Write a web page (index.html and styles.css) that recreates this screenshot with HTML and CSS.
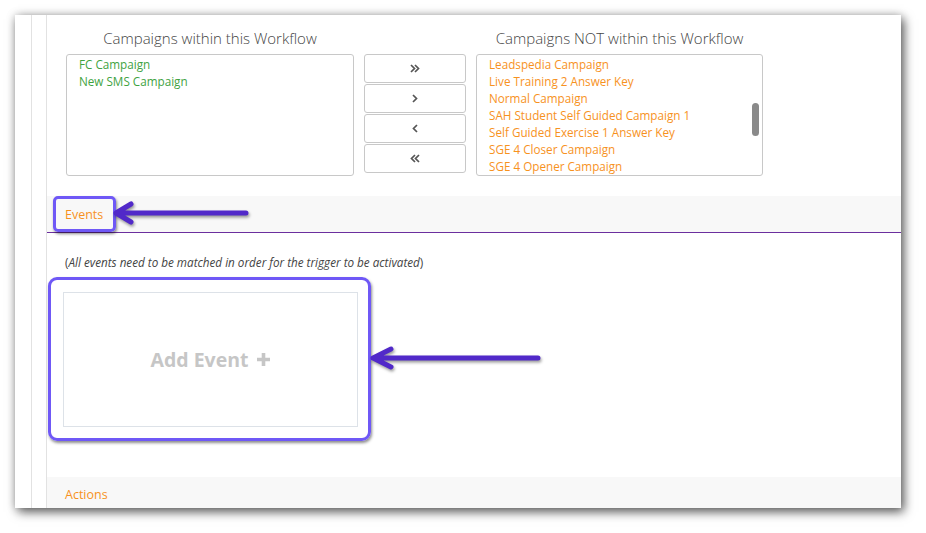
FILE: index.html
```html
<!DOCTYPE html>
<html>
<head>
<meta charset="utf-8">
<link rel="stylesheet" href="styles.css">
</head>
<body>
<div class="panel">
  <div class="rail">
    <div class="main">
      <div class="top">
        <div class="heading h-left">Campaigns within this Workflow</div>
        <div class="heading h-right">Campaigns NOT within this Workflow</div>
        <div class="listbox">
          <div class="item green">FC Campaign</div>
          <div class="item green">New SMS Campaign</div>
        </div>
        <div class="buttons">
          <div class="btn"><svg width="10" height="9" viewBox="0 0 10 9"><path d="M1 1l3.5 3.5L1 8M5 1l3.5 3.5L5 8" fill="none" stroke="#555" stroke-width="1.7"/></svg></div>
          <div class="btn"><svg width="10" height="9" viewBox="0 0 10 9"><path d="M3 1l3.5 3.5L3 8" fill="none" stroke="#555" stroke-width="1.7"/></svg></div>
          <div class="btn"><svg width="10" height="9" viewBox="0 0 10 9"><path d="M7 1L3.5 4.5 7 8" fill="none" stroke="#555" stroke-width="1.7"/></svg></div>
          <div class="btn"><svg width="10" height="9" viewBox="0 0 10 9"><path d="M5 1L1.5 4.5 5 8M9 1L5.5 4.5 9 8" fill="none" stroke="#555" stroke-width="1.7"/></svg></div>
        </div>
        <div class="listbox scroll">
          <div class="item orange">Leadspedia Campaign</div>
          <div class="item orange">Live Training 2 Answer Key</div>
          <div class="item orange">Normal Campaign</div>
          <div class="item orange">SAH Student Self Guided Campaign 1</div>
          <div class="item orange">Self Guided Exercise 1 Answer Key</div>
          <div class="item orange">SGE 4 Closer Campaign</div>
          <div class="item orange">SGE 4 Opener Campaign</div>
          <div class="thumb"></div>
        </div>
      </div>
      <div class="bar events-bar">Events</div>
      <div class="note">(<i>All events need to be matched in order for the trigger to be activated</i>)</div>
      <div class="add-box">
        <span class="add-text">Add Event</span>
        <svg class="plus" width="15" height="15" viewBox="0 0 15 15"><path d="M7.5 1v13M1 7.5h13" stroke="#c6c6c6" stroke-width="3.6"/></svg>
      </div>
      <div class="bar actions-bar">Actions</div>
    </div>
  </div>
  <div class="callout callout-events"></div>
  <div class="callout callout-add"></div>
  <svg class="arrows" width="886" height="493" viewBox="0 0 886 493">
    <g fill="none" stroke="#5129c9" stroke-width="5" stroke-linecap="round" stroke-linejoin="round">
      <path d="M101 198H231M116 189L101 198L116 207"/>
      <path d="M358 343H523M376 334L358 343L376 352"/>
    </g>
  </svg>
</div>
</body>
</html>
```
FILE: styles.css
```css
* { box-sizing: border-box; }
html, body { margin: 0; padding: 0; background: #fff; }
body { font-family: "Open Sans", "Liberation Sans", sans-serif; width: 926px; height: 533px; overflow: hidden; }

.panel {
  position: relative;
  margin: 15px 0 0 15px;
  width: 886px;
  height: 493px;
  background: #fff;
  box-shadow: 3px 4px 10px rgba(0,0,0,0.6), 0 0 9px rgba(0,0,0,0.2);
  overflow: hidden;
}
.rail {
  margin-left: 16px;
  height: 100%;
  border-left: 1px solid #e2e2e2;
  padding-left: 14px;
}
.main {
  height: 100%;
  border-left: 1px solid #e2e2e2;
}
.top {
  display: grid;
  grid-template-columns: 288px 102px 287px;
  column-gap: 10px;
  padding: 14px 0 0 19px;
}
.heading {
  font-size: 15px;
  font-weight: 300;
  line-height: 18px;
  color: #444;
  text-align: center;
  margin-bottom: 7px;
}
.h-left { grid-column: 1; grid-row: 1; }
.h-right { grid-column: 3; grid-row: 1; }
.listbox {
  grid-row: 2;
  position: relative;
  height: 122px;
  border: 1px solid #c8c8c8;
  border-radius: 3px;
  padding: 1px 0 0 12px;
  overflow: hidden;
}
.item { font-size: 11.7px; line-height: 17px; white-space: nowrap; }
.green { color: #3fa33f; }
.orange { color: #f7921e; }
.thumb {
  position: absolute;
  right: 3px;
  top: 48px;
  width: 7px;
  height: 33px;
  border-radius: 4px;
  background: #8a8a8a;
}
.buttons {
  grid-row: 2;
  display: flex;
  flex-direction: column;
  gap: 1px;
}
.btn {
  height: 29px;
  border: 1px solid #c8c8c8;
  border-radius: 3px;
  display: flex;
  align-items: center;
  justify-content: center;
}
.bar {
  background: #f8f8f8;
  height: 36px;
  line-height: 36px;
  padding-left: 18px;
  font-size: 12.5px;
  color: #f7921e;
}
.events-bar {
  margin-top: 20px;
  height: 37px;
  line-height: 38px;
  border-bottom: 1px solid #6b2f9e;
}
.note {
  margin: 22px 0 0 18px;
  font-size: 11.7px;
  line-height: 15px;
  color: #444;
}
.add-box {
  margin: 22px 0 0 16px;
  width: 295px;
  height: 135px;
  border: 1px solid #dde2e8;
  display: flex;
  align-items: center;
  justify-content: center;
  gap: 7px;
}
.add-text {
  font-size: 19.5px;
  font-weight: 700;
  color: #c6c6c6;
}
.actions-bar { margin-top: 50px; }

.callout {
  position: absolute;
  border: 3px solid #6f58f6;
  box-shadow: 1px 2px 3px rgba(0,0,0,0.45);
}
.callout-events {
  left: 38px; top: 181px; width: 63px; height: 36px;
  border-radius: 5px;
}
.callout-add {
  left: 33px; top: 262px; width: 323px; height: 164px;
  border-radius: 9px;
}
.arrows {
  position: absolute;
  left: 0; top: 0;
  pointer-events: none;
  filter: drop-shadow(1px 2px 1.5px rgba(0,0,0,0.4));
}
```
